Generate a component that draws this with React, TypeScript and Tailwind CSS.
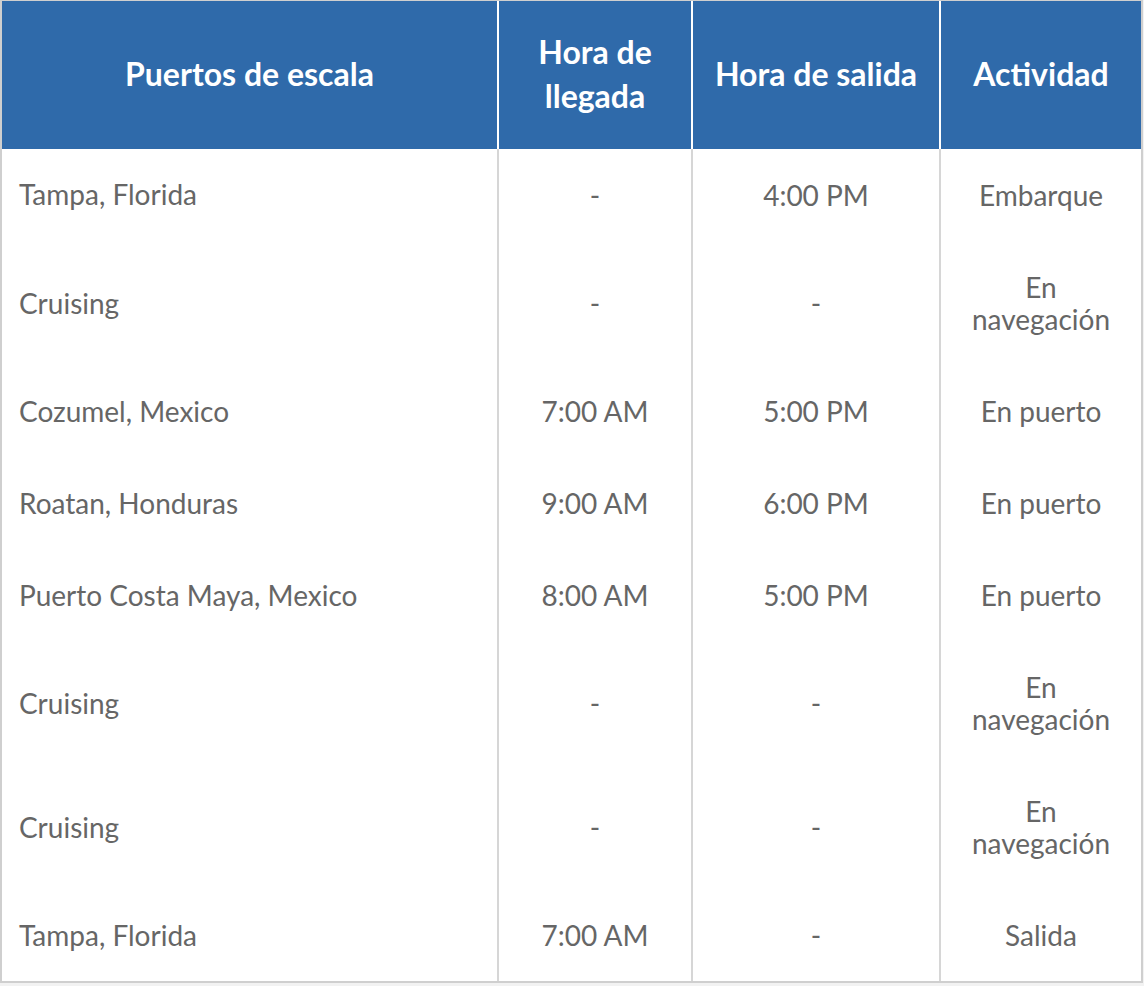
import React from "react";

const rows: [string, string, string, React.ReactNode][] = [
  ["Tampa, Florida", "-", "4:00 PM", "Embarque"],
  ["Cruising", "-", "-", <>En<br />navegación</>],
  ["Cozumel, Mexico", "7:00 AM", "5:00 PM", "En puerto"],
  ["Roatan, Honduras", "9:00 AM", "6:00 PM", "En puerto"],
  ["Puerto Costa Maya, Mexico", "8:00 AM", "5:00 PM", "En puerto"],
  ["Cruising", "-", "-", <>En<br />navegación</>],
  ["Cruising", "-", "-", <>En<br />navegación</>],
  ["Tampa, Florida", "7:00 AM", "-", "Salida"],
];

export default function App() {
  return (
    <div className="min-h-[986px] bg-[#f2f2f2] font-['Lato',sans-serif]">
      <div className="w-[1143px] border-x-2 border-b-2 border-t border-[#cfcfcf] bg-white">
        <table className="w-[1139px] table-fixed border-separate border-spacing-0">
          <colgroup>
            <col className="w-[497px]" />
            <col className="w-[194px]" />
            <col className="w-[248px]" />
            <col className="w-[200px]" />
          </colgroup>
          <thead>
            <tr className="bg-[#2f6aaa] text-white text-[32px] font-bold leading-[44px]">
              <th className="border-r-2 border-white px-[10px] pt-[29px] pb-[31px] text-center align-middle font-bold">Puertos de escala</th>
              <th className="border-r-2 border-white px-[10px] pt-[29px] pb-[31px] text-center align-middle font-bold">Hora de<br />llegada</th>
              <th className="border-r-2 border-white px-[10px] pt-[29px] pb-[31px] text-center align-middle font-bold whitespace-nowrap">Hora de salida</th>
              <th className="px-[10px] pt-[29px] pb-[31px] text-center align-middle font-bold">Actividad</th>
            </tr>
          </thead>
          <tbody className="text-[28px] leading-[32px] text-[#666666]">
            {rows.map((r, i) => (
              <tr key={i}>
                <td className={`border-r-2 border-[#d6d6d6] pl-[17px] pr-[10px] ${i === 0 ? "pt-[28px] pb-[30px]" : "py-[30px]"} text-left align-middle`}>{r[0]}</td>
                <td className="border-r-2 border-[#d6d6d6] px-[10px] py-[30px] text-center align-middle">{r[1]}</td>
                <td className="border-r-2 border-[#d6d6d6] px-[10px] py-[30px] text-center align-middle">{r[2]}</td>
                <td className="px-[6px] py-[30px] text-center align-middle whitespace-nowrap">{r[3]}</td>
              </tr>
            ))}
          </tbody>
        </table>
      </div>
    </div>
  );
}
